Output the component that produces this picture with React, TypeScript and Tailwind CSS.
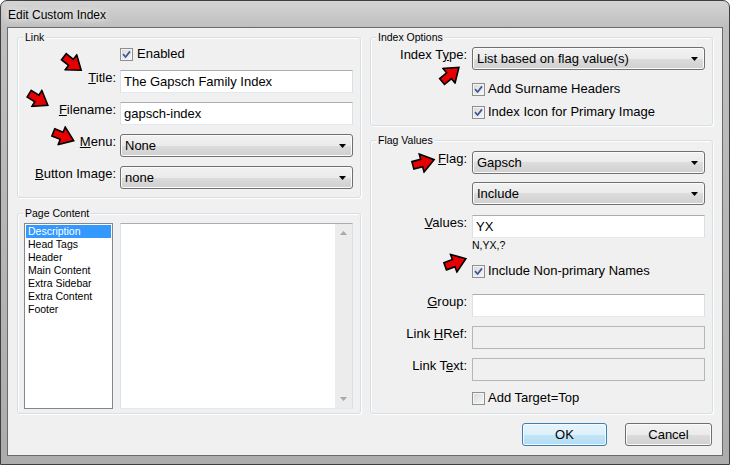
import type { ReactNode } from "react";

const Check = ({ checked = false }: { checked?: boolean }) => (
  <span className="flex h-[13px] w-[13px] shrink-0 items-center justify-center border border-[#8e8f8f] bg-[linear-gradient(135deg,#d6d9dd,#f7f7f7)] shadow-[inset_0_0_0_1px_#f4f4f4]">
    {checked && (
      <svg width="9" height="9" viewBox="0 0 9 9">
        <path d="M1 4.2 L3.6 7 L8 1.4" fill="none" stroke="#3f5596" strokeWidth="1.7" />
      </svg>
    )}
  </span>
);

const CheckRow = ({ checked, label, className = "" }: { checked?: boolean; label: string; className?: string }) => (
  <div className={`flex h-[16px] items-center ${className}`}>
    <Check checked={checked} />
    <span className="ml-[3px] leading-[16px]">{label}</span>
  </div>
);

const TextBox = ({ value = "", disabled = false }: { value?: string; disabled?: boolean }) => (
  <div
    className={
      disabled
        ? "flex h-[23px] items-center border border-[#b4b6b9] bg-[#f0f0f0] px-[3px]"
        : "flex h-[23px] items-center border border-[#abadb3] border-x-[#dbdfe6] border-b-[#e3e9ef] bg-white px-[3px] leading-[16px]"
    }
  >
    {value}
  </div>
);

const Combo = ({ value }: { value: string }) => (
  <div className="flex h-[23px] items-center justify-between rounded-[3px] border border-[#707070] bg-[linear-gradient(#f2f2f2_0%,#ebebeb_50%,#dddddd_50%,#cfcfcf_100%)] pl-[4px] pr-[6px] leading-[16px] shadow-[inset_0_0_0_1px_#fbfbfb]">
    <span>{value}</span>
    <svg width="7" height="4" viewBox="0 0 7 4">
      <path d="M0 0 H7 L3.5 4 Z" fill="#000" />
    </svg>
  </div>
);

const Group = ({ title, className = "", children }: { title: string; className?: string; children: ReactNode }) => (
  <fieldset className={`rounded-[3px] border border-[#d5dfe5] shadow-[inset_1px_1px_0_#fff,1px_1px_0_#fff] ${className}`}>
    <legend className="ml-[5px] bg-[#f0f0f0] px-[2px] text-[10.5px] leading-[13px]">{title}</legend>
    {children}
  </fieldset>
);

const LRow = ({ label, className = "", children }: { label: ReactNode; className?: string; children: ReactNode }) => (
  <div className={`flex items-start ${className}`}>
    <span className="w-[98px] shrink-0 text-right leading-[16px]">{label}</span>
    <div className="ml-[4px] w-[233px]">{children}</div>
  </div>
);

const RRow = ({ label, className = "", children }: { label: ReactNode; className?: string; children: ReactNode }) => (
  <div className={`flex items-start ${className}`}>
    <span className="w-[96px] shrink-0 text-right leading-[16px]">{label}</span>
    <div className="ml-[5px] w-[233px]">{children}</div>
  </div>
);

// red callout arrow, points right before rotation
const Arrow = ({ className }: { className: string }) => (
  <svg viewBox="0 0 26 22" className={`absolute h-[21px] w-[25px] ${className}`}>
    <polygon
      points="1.5,7 11,7 11,1.2 24.5,11 11,20.8 11,15 1.5,15"
      fill="#e80000"
      stroke="#000"
      strokeWidth="1.7"
    />
  </svg>
);

const pages = ["Description", "Head Tags", "Header", "Main Content", "Extra Sidebar", "Extra Content", "Footer"];

export default function App() {
  return (
    <div className="relative h-[465px] w-[730px] overflow-hidden bg-white font-['Liberation_Sans',Arial,sans-serif] text-[13px] text-black">
      <div className="flex h-full flex-col rounded-t-[7px] border border-[#3f3f3f] bg-[linear-gradient(180deg,#d4d4d4_0px,#bfbfbf_26px,#acacac_100%)]">
        <div className="flex h-[26px] shrink-0 items-center pl-[7px] pt-[1px] text-[12px] [text-shadow:0_0_6px_#fff,0_0_10px_#fff]">
          Edit Custom Index
        </div>
        <div className="mx-[6px] mb-[8px] flex flex-1 gap-[9px] border border-[#6b6b6b] bg-[#f0f0f0] pl-[9px] pr-[8px] pt-[3px]">
          {/* left column */}
          <div className="flex w-[344px] flex-col">
            <Group title="Link" className="h-[167px]">
              <div className="pt-[2px]">
                <div className="flex h-[16px] items-center pl-[102px]">
                  <Check checked />
                  <span className="ml-[4px]">Enabled</span>
                </div>
                <LRow className="mt-[8px]" label={<><u>T</u>itle:</>}>
                  <TextBox value="The Gapsch Family Index" />
                </LRow>
                <LRow className="mt-[9px]" label={<><u>F</u>ilename:</>}>
                  <TextBox value="gapsch-index" />
                </LRow>
                <LRow className="mt-[9px]" label={<><u>M</u>enu:</>}>
                  <Combo value="None" />
                </LRow>
                <LRow className="mt-[9px]" label={<><u>B</u>utton Image:</>}>
                  <Combo value="none" />
                </LRow>
              </div>
            </Group>
            <Group title="Page Content" className="mt-[9px] h-[207px]">
              <div className="flex pl-[6px] pt-[3px]">
                <div className="h-[186px] w-[89px] border border-[#828790] bg-white p-[1px] text-[10.5px] leading-[13px]">
                  {pages.map((p, i) => (
                    <div key={p} className={i === 0 ? "bg-[#3399ff] pl-[2px] text-white" : "pl-[2px]"}>
                      {p}
                    </div>
                  ))}
                </div>
                <div className="ml-[7px] flex h-[186px] w-[233px] border border-[#abadb3] border-x-[#dbdfe6] border-b-[#e3e9ef] bg-white">
                  <div className="flex-1" />
                  <div className="flex w-[17px] flex-col items-center justify-between bg-[#ececec] py-[7px]">
                    <svg width="7" height="4" viewBox="0 0 7 4">
                      <path d="M0 4 H7 L3.5 0 Z" fill="#a8a8a8" />
                    </svg>
                    <svg width="7" height="4" viewBox="0 0 7 4">
                      <path d="M0 0 H7 L3.5 4 Z" fill="#a8a8a8" />
                    </svg>
                  </div>
                </div>
              </div>
            </Group>
          </div>

          {/* right column */}
          <div className="flex w-[343px] flex-col">
            <Group title="Index Options" className="h-[95px]">
              <div className="pt-[3px]">
                <RRow label={<>Index T<u>y</u>pe:</>}>
                  <Combo value="List based on flag value(s)" />
                </RRow>
                <CheckRow className="mt-[11px] pl-[101px]" checked label="Add Surname Headers" />
                <CheckRow className="mt-[7px] pl-[101px]" checked label="Index Icon for Primary Image" />
              </div>
            </Group>
            <Group title="Flag Values" className="mt-[8px] h-[280px]">
              <div className="pt-[4px]">
                <RRow label={<><u>F</u>lag:</>}>
                  <Combo value="Gapsch" />
                </RRow>
                <RRow className="mt-[8px]" label="">
                  <Combo value="Include" />
                </RRow>
                <RRow className="mt-[10px]" label={<><u>V</u>alues:</>}>
                  <TextBox value="YX" />
                </RRow>
                <div className="mt-[1px] pl-[101px] text-[10.5px] leading-[13px]">N,YX,?</div>
                <CheckRow className="mt-[11px] pl-[101px]" checked label="Include Non-primary Names" />
                <RRow className="mt-[15px]" label={<><u>G</u>roup:</>}>
                  <TextBox />
                </RRow>
                <RRow className="mt-[9px]" label={<>Link <u>H</u>Ref:</>}>
                  <TextBox disabled />
                </RRow>
                <RRow className="mt-[9px]" label={<>Link T<u>e</u>xt:</>}>
                  <TextBox disabled />
                </RRow>
                <CheckRow className="mt-[9px] pl-[101px]" label="Add Target=Top" />
              </div>
            </Group>
            <div className="mt-[9px] flex justify-end gap-[18px] pr-[1px]">
              <button className="h-[23px] w-[85px] rounded-[3px] border border-[#3c7fb1] bg-[linear-gradient(#e8f5fc_0%,#dbf0fb_50%,#c4e5f7_50%,#b2dcf3_100%)] shadow-[inset_0_0_0_1px_#f4fbfe]">
                OK
              </button>
              <button className="h-[23px] w-[87px] rounded-[3px] border border-[#707070] bg-[linear-gradient(#f2f2f2_0%,#ebebeb_50%,#dddddd_50%,#cfcfcf_100%)] shadow-[inset_0_0_0_1px_#fbfbfb]">
                Cancel
              </button>
            </div>
          </div>
        </div>
      </div>

      {/* annotation arrows */}
      <Arrow className="left-[60px] top-[53px] rotate-[38deg]" />
      <Arrow className="left-[26px] top-[89px] rotate-[32deg]" />
      <Arrow className="left-[51px] top-[126px] rotate-[22deg]" />
      <Arrow className="left-[438px] top-[64px] rotate-[-40deg]" />
      <Arrow className="left-[411px] top-[152px] rotate-[-15deg]" />
      <Arrow className="left-[443px] top-[252px] rotate-[-20deg]" />
    </div>
  );
}
